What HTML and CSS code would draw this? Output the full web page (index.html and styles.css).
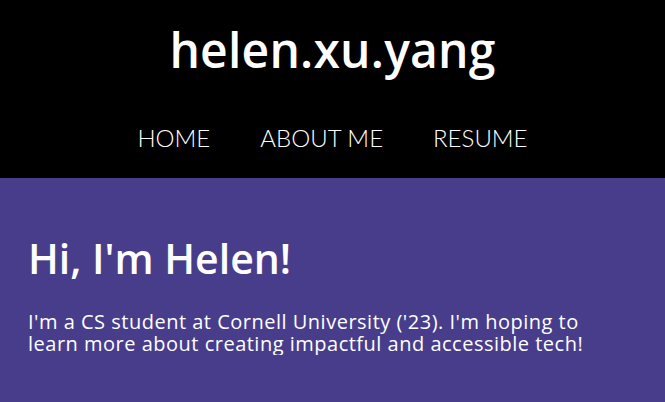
FILE: index.html
```html
<!DOCTYPE html>
<html>
<head>
<meta charset="utf-8">
<link rel="stylesheet" href="styles.css">
</head>
<body>
<header class="site-header">
  <h1 class="logo">helen.xu.yang</h1>
  <nav class="nav">
    <a class="nav-link" href="#">HOME</a>
    <a class="nav-link" href="#">ABOUT ME</a>
    <a class="nav-link" href="#">RESUME</a>
  </nav>
</header>
<main class="intro">
  <h2 class="intro-title">Hi, I'm Helen!</h2>
  <p class="intro-text">I'm a CS student at Cornell University ('23). I'm hoping to learn more about creating impactful and accessible tech!</p>
</main>
</body>
</html>
```
FILE: styles.css
```css
html, body {
  margin: 0;
  padding: 0;
  background: #483d8b;
}
body {
  font-family: "Open Sans", sans-serif;
  color: #fff;
}
.site-header {
  background: #000;
  height: 178px;
  display: flex;
  flex-direction: column;
  align-items: center;
}
.logo {
  margin: 18px 0 0;
  font-size: 48px;
  font-weight: 600;
  line-height: 64px;
  letter-spacing: 0.2px;
}
.nav {
  display: flex;
  gap: 50px;
  margin-top: 41px;
}
.nav-link {
  color: #fff;
  text-decoration: none;
  font-family: "Lato", sans-serif;
  font-weight: 300;
  font-size: 24px;
  line-height: 30px;
}
.intro {
  padding: 52px 28px 0;
}
.intro-title {
  margin: 0;
  font-size: 41px;
  font-weight: 600;
  line-height: 56px;
}
.intro-text {
  margin: 25px 0 0;
  font-size: 20px;
  line-height: 22px;
  letter-spacing: 0.5px;
  max-width: 595px;
}
```
